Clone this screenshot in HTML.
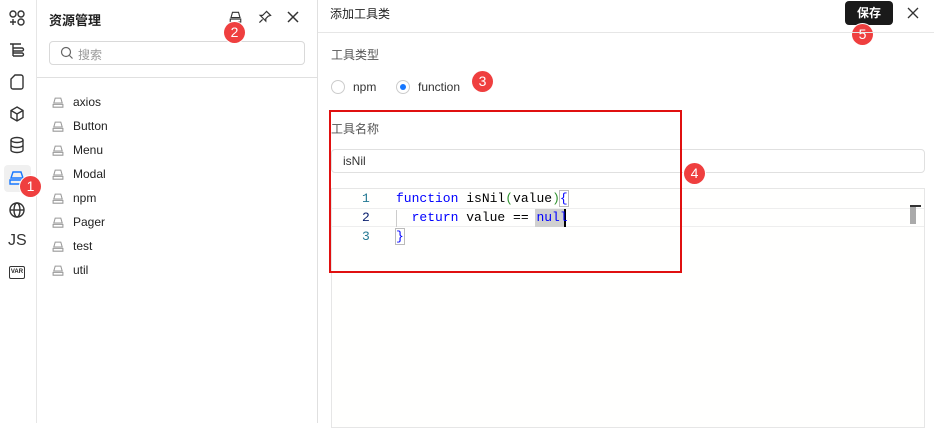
<!DOCTYPE html>
<html><head><meta charset="utf-8"><style>
*{box-sizing:border-box;margin:0;padding:0}
body{width:934px;height:423px;overflow:hidden;background:#fff;font-family:"Liberation Sans","Noto Sans CJK SC",sans-serif;font-size:12px;color:#222;position:relative}
.abs{position:absolute}
.bar{left:0;top:0;width:37px;height:423px;border-right:1px solid #e6e6e6}
.ic{position:absolute;left:7px;width:20px;height:20px}
.panel{left:37px;top:0;width:281px;height:423px;border-right:1px solid #e0e0e0}
.item{position:absolute;left:14px;font-size:12px;color:#222}
.item svg{position:absolute;left:0;top:1px}
.item span{position:absolute;left:22px;top:0;white-space:nowrap}
.badge{position:absolute;width:21px;height:21px;border-radius:50%;background:#ef3f3f;color:#fff;font-size:14px;text-align:center;line-height:21px;box-shadow:0 0 0 1px #fff}
.code{font-family:"Liberation Mono","DejaVu Sans Mono",monospace;font-size:13px;position:absolute;white-space:pre;line-height:19px}
</style></head><body>
<div class="abs bar">
 <svg class="ic" style="top:8px" viewBox="0 0 20 20" fill="none" stroke="#333" stroke-width="1.4"><circle cx="6" cy="6" r="3"/><circle cx="14" cy="6" r="3"/><circle cx="14" cy="14" r="3"/><path d="M6 11v6M3 14h6"/></svg>
 <svg class="ic" style="top:40px" viewBox="0 0 20 20" fill="none" stroke="#333" stroke-width="1.4"><path d="M3 4h11M6 8h9a1.5 1.5 0 0 1 0 3H6M6 13h9a1.5 1.5 0 0 1 0 3H6M6 4v12"/></svg>
 <svg class="ic" style="top:72px" viewBox="0 0 20 20" fill="none" stroke="#333" stroke-width="1.4"><path d="M8 3h6a2 2 0 0 1 2 2v10a2 2 0 0 1-2 2H6a2 2 0 0 1-2-2V7z"/></svg>
 <svg class="ic" style="top:104px" viewBox="0 0 20 20" fill="none" stroke="#333" stroke-width="1.4"><path d="M10 3l6 3.5v7L10 17l-6-3.5v-7zM4 6.5L10 10l6-3.5M10 10v7"/></svg>
 <svg class="ic" style="top:135px" viewBox="0 0 20 20" fill="none" stroke="#333" stroke-width="1.4"><ellipse cx="10" cy="5" rx="6" ry="2.5"/><path d="M4 5v10c0 1.4 2.7 2.5 6 2.5s6-1.1 6-2.5V5M4 10c0 1.4 2.7 2.5 6 2.5s6-1.1 6-2.5"/></svg>
 <div class="abs" style="left:4px;top:165px;width:27px;height:27px;background:#f0f0f0;border-radius:4px"></div>
 <svg class="ic" style="top:168px" viewBox="0 0 20 20" fill="none" stroke="#1677ff" stroke-width="1.4"><path d="M6 4h8l2 6H4zM4 10v0M3 12h14v4H3z"/></svg>
 <svg class="ic" style="top:200px" viewBox="0 0 20 20" fill="none" stroke="#333" stroke-width="1.4"><circle cx="10" cy="10" r="7"/><ellipse cx="10" cy="10" rx="3" ry="7"/><path d="M3 10h14"/></svg>
 <div class="abs" style="left:8px;top:232px;font-size:16px;color:#333">JS</div>
 <div class="abs" style="left:9px;top:266px;width:16px;height:13px;border:1.3px solid #333;border-radius:2px;font-size:6px;line-height:10px;text-align:center;font-weight:bold">VAR</div>
</div>
<div class="badge" style="left:20px;top:176px">1</div>

<div class="abs panel">
 <div class="abs" style="left:12px;top:10px;font-size:13px;font-weight:bold">资源管理</div>
 <svg class="abs" style="left:191px;top:10px" width="15" height="15" viewBox="0 0 20 20" fill="none" stroke="#333" stroke-width="1.5"><path d="M6 3h8l2 7H4zM3 12h14v4H3z"/></svg>
 <svg class="abs" style="left:220px;top:9px" width="16" height="16" viewBox="0 0 20 20" fill="none" stroke="#333" stroke-width="1.5"><path d="M12 3l5 5-3 1-3 3 0 3-7-7 3 0 3-3zM7 13l-4 4"/></svg>
 <svg class="abs" style="left:249px;top:10px" width="14" height="14" viewBox="0 0 14 14" stroke="#333" stroke-width="1.5"><path d="M2 2l10 10M12 2L2 12"/></svg>
 <div class="abs" style="left:12px;top:41px;width:256px;height:24px;border:1px solid #d9d9d9;border-radius:4px">
  <svg class="abs" style="left:10px;top:4px" width="14" height="14" viewBox="0 0 14 14" fill="none" stroke="#666" stroke-width="1.2"><circle cx="6" cy="6" r="4.5"/><path d="M9.5 9.5l3 3"/></svg>
  <span class="abs" style="left:28px;top:4px;color:#999;font-size:12px">搜索</span>
 </div>
 <div class="abs" style="left:0;top:77px;width:281px;border-top:1px solid #e0e0e0"></div>
 <div class="item" style="top:95px"><svg width="14" height="14" viewBox="0 0 20 20" fill="none" stroke="#999" stroke-width="1.5"><path d="M6 3h8l2 7H4zM3 12h14v4H3z"/></svg><span>axios</span></div>
 <div class="item" style="top:119px"><svg width="14" height="14" viewBox="0 0 20 20" fill="none" stroke="#999" stroke-width="1.5"><path d="M6 3h8l2 7H4zM3 12h14v4H3z"/></svg><span>Button</span></div>
 <div class="item" style="top:143px"><svg width="14" height="14" viewBox="0 0 20 20" fill="none" stroke="#999" stroke-width="1.5"><path d="M6 3h8l2 7H4zM3 12h14v4H3z"/></svg><span>Menu</span></div>
 <div class="item" style="top:167px"><svg width="14" height="14" viewBox="0 0 20 20" fill="none" stroke="#999" stroke-width="1.5"><path d="M6 3h8l2 7H4zM3 12h14v4H3z"/></svg><span>Modal</span></div>
 <div class="item" style="top:191px"><svg width="14" height="14" viewBox="0 0 20 20" fill="none" stroke="#999" stroke-width="1.5"><path d="M6 3h8l2 7H4zM3 12h14v4H3z"/></svg><span>npm</span></div>
 <div class="item" style="top:215px"><svg width="14" height="14" viewBox="0 0 20 20" fill="none" stroke="#999" stroke-width="1.5"><path d="M6 3h8l2 7H4zM3 12h14v4H3z"/></svg><span>Pager</span></div>
 <div class="item" style="top:239px"><svg width="14" height="14" viewBox="0 0 20 20" fill="none" stroke="#999" stroke-width="1.5"><path d="M6 3h8l2 7H4zM3 12h14v4H3z"/></svg><span>test</span></div>
 <div class="item" style="top:263px"><svg width="14" height="14" viewBox="0 0 20 20" fill="none" stroke="#999" stroke-width="1.5"><path d="M6 3h8l2 7H4zM3 12h14v4H3z"/></svg><span>util</span></div>
</div>
<div class="badge" style="left:224px;top:22px">2</div>

<div class="abs" style="left:330px;top:5px;font-size:12px;color:#222">添加工具类</div>
<div class="abs" style="left:845px;top:1px;width:48px;height:24px;background:#1a1a1a;border-radius:4px;color:#fff;font-size:12px;font-weight:bold;text-align:center;line-height:24px">保存</div>
<svg class="abs" style="left:907px;top:7px" width="12" height="12" viewBox="0 0 12 12" stroke="#333" stroke-width="1.3"><path d="M1 1l10 10M11 1L1 11"/></svg>
<div class="badge" style="left:852px;top:24px">5</div>
<div class="abs" style="left:318px;top:32px;width:616px;border-top:1px solid #e6e6e6"></div>

<div class="abs" style="left:331px;top:46px;color:#555">工具类型</div>
<div class="abs" style="left:331px;top:80px;width:14px;height:14px;border:1px solid #ccc;border-radius:50%"></div>
<div class="abs" style="left:353px;top:80px;color:#333">npm</div>
<div class="abs" style="left:396px;top:80px;width:14px;height:14px;border:1px solid #ccc;border-radius:50%"><div class="abs" style="left:3px;top:3px;width:6px;height:6px;border-radius:50%;background:#1677ff"></div></div>
<div class="abs" style="left:418px;top:80px;color:#333">function</div>
<div class="badge" style="left:472px;top:71px">3</div>

<div class="abs" style="left:331px;top:120px;color:#555">工具名称</div>
<div class="abs" style="left:331px;top:149px;width:594px;height:24px;border:1px solid #e0e0e0;border-radius:4px"><span class="abs" style="left:11px;top:4px;color:#333">isNil</span></div>

<div class="abs" style="left:331px;top:188px;width:594px;height:240px;border:1px solid #e6e6e6;background:#fffffe"></div>
<div class="abs" style="left:332px;top:208px;width:592px;height:19px;border-top:1px solid #eee;border-bottom:1px solid #eee"></div>
<div class="abs" style="left:910px;top:205px;width:11px;height:2px;background:#333"></div>
<div class="abs" style="left:910px;top:207px;width:6px;height:17px;background:#aaa"></div>
<div class="code" style="left:362px;top:189px;color:#237893">1
<span style="color:#0b216f">2</span>
3</div>
<div class="abs" style="left:513px;top:191px;width:0;height:0"></div>
<div class="abs" style="left:396px;top:210px;width:1px;height:17px;background:#ccc"></div>
<div class="abs" style="left:535px;top:209px;width:31px;height:18px;background:#d0d0d0"></div>
<div class="abs" style="left:564px;top:209px;width:2px;height:18px;background:#000"></div>
<div class="code" style="left:396px;top:189px;color:#000"><span style="color:#0000ff">function</span> isNil<span style="color:#319331">(</span>value<span style="color:#319331">)</span><span style="color:#0000ff;outline:1px solid #bbb">{</span>
  <span style="color:#0000ff">return</span> value == <span style="color:#0000ff">null</span>
<span style="color:#0000ff;outline:1px solid #bbb">}</span></div>

<div class="abs" style="left:329px;top:110px;width:353px;height:163px;border:2px solid #e01010"></div>
<div class="badge" style="left:684px;top:163px">4</div>
</body></html>
